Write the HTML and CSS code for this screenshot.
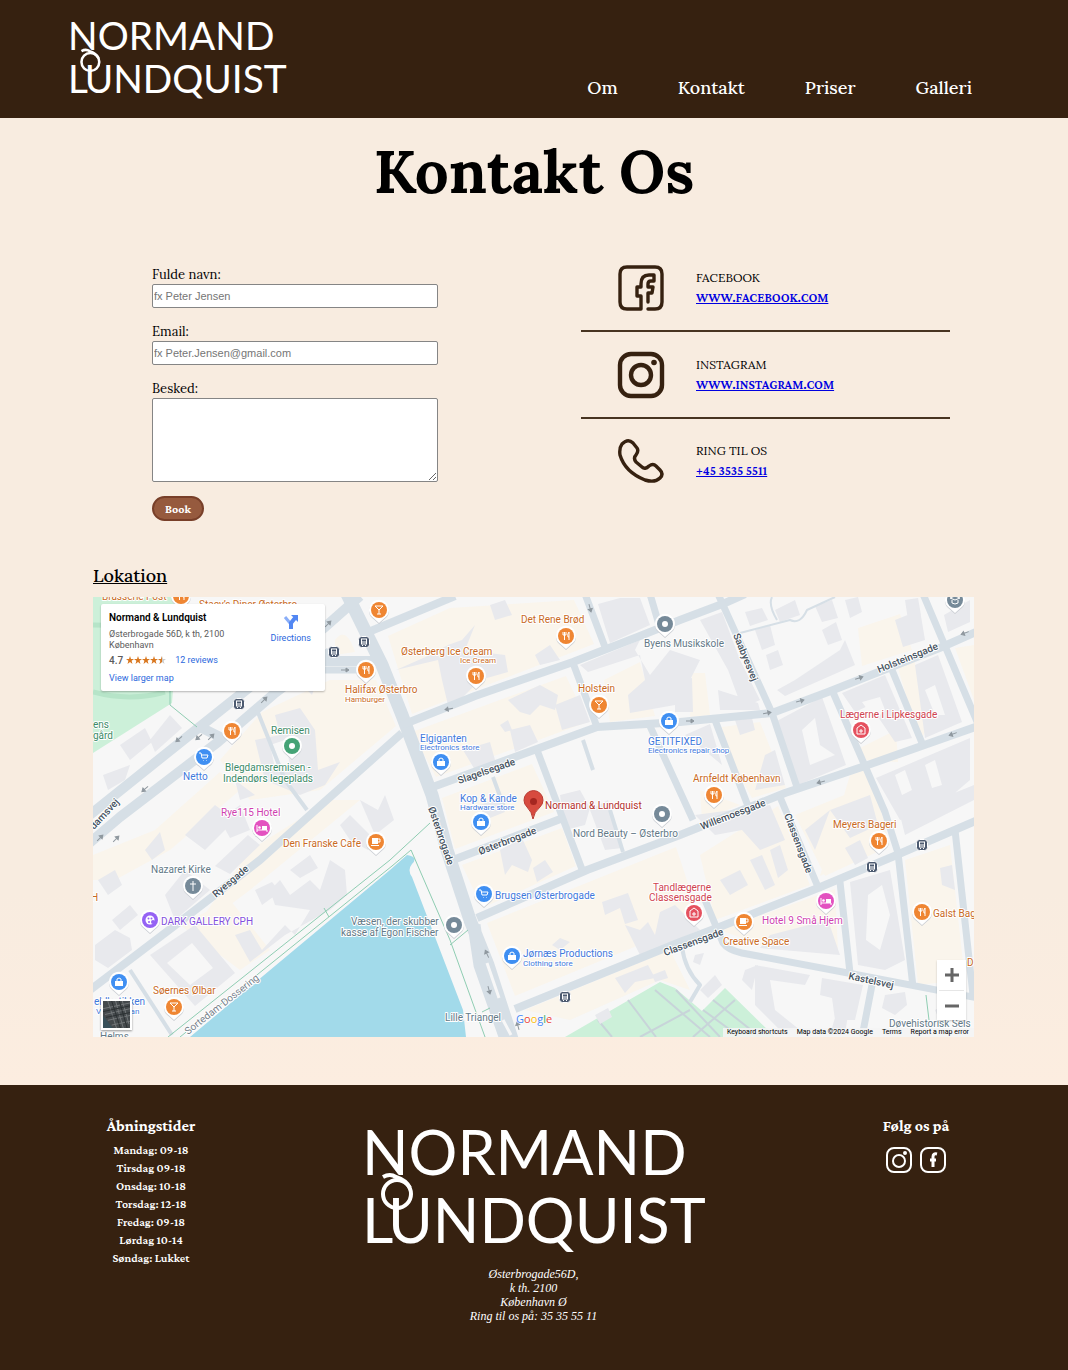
FILE: index.html
```html
<!DOCTYPE html>
<html lang="da">
<head>
<meta charset="utf-8">
<meta name="viewport" content="width=device-width, initial-scale=1">
<title>Kontakt | Normand Lundquist</title>
<link rel="stylesheet" href="styles.css">
</head>
<body>
<header class="site-header">
  <a href="#" class="brand">
    <svg class="logo" viewBox="0 0 338 126" role="img" aria-label="Normand Lundquist">
      <text class="logo-text" x="-3" y="47">NORMAND</text>
      <text class="logo-text" y="115"><tspan x="-3">L</tspan><tspan x="23">UNDQUIST</tspan></text>
      <path class="logo-swash" d="M18 49Q25 45 31 49Q41 52 45 60"/><circle class="logo-swash" cx="32" cy="66" r="14"/>
    </svg>
  </a>
  <nav class="main-nav">
    <a href="#">Om</a><a href="#">Kontakt</a><a href="#">Priser</a><a href="#">Galleri</a>
  </nav>
</header>

<main>
  <h1>Kontakt Os</h1>
  <div class="contact">
    <form class="form">
      <label for="name">Fulde navn:</label>
      <input id="name" type="text" placeholder="fx Peter Jensen">
      <label for="email">Email:</label>
      <input id="email" type="email" placeholder="fx Peter.Jensen@gmail.com">
      <label for="message">Besked:</label>
      <textarea id="message"></textarea>
      <button type="submit">Book</button>
    </form>
    <ul class="channels">
      <li>
        <svg class="channel-icon" viewBox="0 0 48 48"><path stroke-width="3.4" d="M23 45H10Q3 45 3 38V10Q3 3 10 3H38Q45 3 45 10V38Q45 45 38 45H31M24 45V32H20V23H24V20Q24 11 32 11H37V17H34Q31 17 31 20V23H36L35 29H31V38"/></svg>
        <div><p>FACEBOOK</p><a href="#">WWW.FACEBOOK.COM</a></div>
      </li>
      <li>
        <svg class="channel-icon" viewBox="0 0 48 48"><rect x="3" y="3" width="42" height="42" rx="11" stroke-width="4.4"/><circle cx="24" cy="24" r="10" stroke-width="4.4"/><circle class="solid" cx="37" cy="11.500" r="2.800"/></svg>
        <div><p>INSTAGRAM</p><a href="#">WWW.INSTAGRAM.COM</a></div>
      </li>
      <li>
        <svg class="channel-icon" viewBox="0 0 48 48"><path stroke-width="3.4" d="M5 7Q11 1 16 6L20 11Q22 14 19 18Q16 21 19 25L25 30Q28 33 32 29Q36 26 39 29L43 33Q47 37 43 41Q38 46 28 43Q8 35 3 18Q2 11 5 7Z"/></svg>
        <div><p>RING TIL OS</p><a href="tel:+4535355511">+45 3535 5511</a></div>
      </li>
    </ul>
  </div>

  <section class="location">
    <h2>Lokation</h2>
    <div class="map">
      <svg class="map-canvas" viewBox="93 597 881 440" preserveAspectRatio="xMidYMid slice">
        <defs>
          <g id="pin"><path fill="#c9cdd2" d="M0 14L-5 9.500A10 10 0 1 1 5 9.500Z"/><path fill="#fff" d="M0 13L-5 8.500A10 10 0 1 1 5 8.500Z"/><circle r="8"/></g>
          <path id="fork" class="glyph" d="M-3-4V-1M-1.500-4V-1M0-4V-1M-3-1H0M-1.500-1V4M3 4V-4Q1-2 2 1H3"/>
          <path id="glass" class="glyph" d="M-4-4H4L0 0ZM0 0V4M-2 4H2"/>
          <path id="cart" class="glyph" d="M-5-4H-3L-2 1H3L4-2H-3M-1 3.500H-.5M2.500 3.500H3"/>
          <g id="bag"><path fill="#fff" d="M-4-1H4V4H-4Z"/><path class="glyph" d="M-2-1V-3Q0-5 2-3V-1"/></g>
          <g id="bed"><path class="glyph" d="M-5-3V4M-5 2H5V4"/><path fill="#fff" d="M0-2H5V2H0Z"/><circle fill="#fff" cx="-2.500" cy="-.5" r="1.300"/></g>
          <g id="cup"><path fill="#fff" d="M-4-4H2V2H-4ZM-5 3H3V4H-5Z"/><path class="glyph" d="M2-3H4V0H2"/></g>
          <circle id="dot" fill="#fff" r="3"/>
          <path id="cross" class="glyph" d="M0-5V5M-3-2H3"/>
          <path id="clinic" class="glyph" d="M-4 4V-2L0-5L4-2V4ZM0-1V3M-2 1H2"/>
          <g id="bus"><rect fill="#4c5a70" stroke="#fff" x="-5.500" y="-5.500" width="11" height="11" rx="3"/><rect class="glyph" x="-2.500" y="-3" width="5" height="5"/><path class="glyph" d="M-2.500 0H2.500M-2 3.500H-1M1 3.500H2"/></g>
          <path id="arrow" fill="#8f989f" stroke="#8f989f" d="M-4 0H1V-2L4 0L1 2V0"/>
        </defs>
        <rect x="93" y="597" width="881" height="440" fill="#f7f7f7"/>

        <!-- commercial blocks -->
        <g fill="#faf5ec">
          <path d="M388 636L450 608L574 600L594 644L412 714ZM412 732L566 676L588 722L436 777ZM442 798L532 764L554 812L455 849ZM462 865L562 828L576 866L482 908ZM487 923L676 847L700 920L515 996ZM525 1010L670 950L690 990L660 980L570 1020ZM330 680L376 680L396 726L320 790L250 800L220 760L262 712ZM335 640Q346 625 355 652L335 655ZM155 830L220 772L240 790L170 850L115 880L93 880V855ZM250 850L330 800L360 800L250 890L190 935ZM180 925L230 900L270 950L240 970Z"/>
          <path d="M604 680L640 662L655 716L610 722ZM692 673L705 673L710 715L690 717ZM722 727L760 722L786 788L752 798L725 750ZM858 628L900 614L912 650L862 666ZM898 668L914 660L932 716L920 743ZM955 648L974 645V700ZM700 855L778 806L810 885L715 920ZM720 930L835 889L838 950L760 945ZM905 860L950 845L965 980L918 985ZM795 815L874 783L888 847L825 876ZM850 775L870 768L890 845L820 876ZM700 790L740 805L702 820ZM93 620L160 600L172 630L93 640ZM860 748L896 730L898 762L866 760Z"/>
        </g>
        <!-- parks and lake -->
        <path fill="#ccf0d9" d="M93 597H180L172 703L93 753ZM565 1037L660 982L675 988L702 1011L725 988L775 1037Z"/>
        <path fill="none" stroke="#b6e4c8" stroke-width="5" d="M93 625Q150 625 180 640M93 692Q130 702 165 692"/>
        <path fill="#a2daea" d="M190 1037L390 870L407 855Q419 857 412 864Q407 870 412 877L463 1010L466 1037Z"/>
        <path fill="none" stroke="#c8d4d9" stroke-width="2" d="M598 1020L612 1037M628 1000L656 1037M676 990L720 1037M655 990L690 1020L710 1037M640 1037L690 1010M703 1010L740 1037M713 1000L760 1037M693 1037L735 1000"/>

        <!-- buildings -->
        <g fill="#e8e9ed">
          <path d="M150 740L170 715L182 728L155 752ZM120 745L145 728L152 742L130 760ZM103 775L130 765L125 780L108 790ZM255 740L280 735L275 715L300 708L315 730L318 770L340 762L325 785L300 795L265 780ZM295 678L318 678L312 695ZM185 835L215 805L235 820L205 850ZM220 820L240 805L250 830L230 838ZM240 800L235 780L255 795ZM145 850L160 832L165 850L152 860ZM215 866L248 835L260 845L230 874ZM165 895L185 870L210 890L175 920ZM112 920L130 905L138 915L120 930ZM95 945L115 930L130 938L132 950L108 968L95 960ZM98 880L115 870L122 885L108 895Z"/>
          <path d="M150 955L195 925L235 973L195 1006ZM235 935L250 930L262 950L285 925L295 935L310 910L275 905L270 890L280 880L290 895L310 880L320 890L330 860L345 870L347 895L330 910L285 935L250 962ZM255 890L272 882L280 892L262 905ZM290 870L310 855L318 868L300 878ZM340 825L350 815L375 840L368 850L350 840ZM360 800L378 810L385 795L394 820L375 835Z"/>
          <path d="M396 670L430 655L448 645L462 640L475 625L465 650L505 655L508 672L480 680L460 700L448 705L442 680L438 660ZM535 655L550 645L560 660L540 665ZM508 700L540 685L558 695L555 710L540 705L530 715L520 712ZM555 705L580 695L590 722L562 730ZM510 730L530 725L538 742L515 752ZM463 750L490 742L495 760L475 770ZM500 725L508 720L512 730L505 732ZM490 605L505 600L512 615L495 620ZM598 604L620 598L640 598L650 625L610 643ZM622 600L640 598L645 615L628 618ZM580 665L640 640L635 650L650 675L670 650L700 660L690 680L675 705L630 713L628 695L645 680L640 655L588 672Z"/>
          <path d="M500 850L522 838L532 860L528 872L512 865L505 875ZM533 868L545 860L553 872L537 882ZM602 902L628 893L638 920L625 924L620 908L605 915ZM625 925L640 930L648 922L655 935L660 912L675 905L700 930L640 955ZM552 945L560 938L570 942L560 950ZM615 978L648 965L655 978L635 982L625 993ZM595 1015L608 1008L612 1017L600 1024ZM560 795L580 790L590 808L585 825L565 830ZM590 810L608 800L622 848L605 850ZM480 805L500 798L505 812L485 820Z"/>
          <path d="M700 620L722 612L740 660L760 700L742 708L728 670ZM718 690L740 697L758 703L760 710L720 710ZM675 680L692 678L693 712L675 712ZM745 612L762 608L768 620L750 626ZM755 630L770 625L775 645L762 650ZM766 655L778 650L783 665L770 670ZM775 610L795 600L800 615L780 622ZM777 690L795 680L840 650L845 640L855 665L785 696ZM815 606L832 600L838 618L822 622ZM822 630L836 622L842 640L828 645ZM845 600L858 597L862 612L850 618ZM895 620L920 610L925 640L903 647ZM905 600L918 598L921 615L908 620ZM944 615L970 600V622L948 632Z"/>
          <path d="M775 722L822 697L846 765L798 785ZM842 693L885 675L912 738L895 742L870 705L855 712ZM915 665L938 655L962 722L925 738ZM876 778L970 738V780L935 810L900 820ZM900 815L974 785V800L905 835ZM735 720L752 718L755 730L740 735ZM765 755L775 750L785 785L755 790ZM685 735L710 724L722 765L710 755ZM695 815L770 805L785 840L760 850L742 830L715 835ZM750 860L762 855L775 885L765 890ZM720 880L740 870L748 885L730 895ZM770 850L780 845L788 870L778 878ZM805 830L830 810L870 795L878 825L850 838L830 810L815 850ZM845 848L860 840L868 858L855 865Z"/>
          <path d="M850 882L890 870L905 960L885 970L858 965ZM770 935L828 920L840 955L760 948ZM940 868L952 865L955 890L942 885ZM755 965L810 975L805 985L770 980L775 1010L800 1030L780 1030L755 1005ZM822 978L863 985L855 1020L835 1020L832 998L820 995ZM885 995L905 992L907 1005L895 1015L882 1008ZM745 970L758 965L752 990L742 980ZM700 990L715 975L722 985L708 998ZM695 955L704 953L700 965L693 962ZM652 975L665 970L668 978L655 982ZM935 1010L960 995L955 1020L940 1022ZM840 1000L850 1000L845 1035L830 1035Z"/>
        </g>
        <path fill="#f7f7f7" d="M167 963L192 943L213 968L190 985ZM802 730L815 718L820 745L835 755L810 765ZM862 702L880 697L885 710L875 720ZM868 895L882 885L890 915L880 950L866 940ZM895 775L905 770L912 790L902 795ZM925 765L935 760L942 785L932 788ZM270 745L285 740L290 765L275 768ZM925 690L935 685L945 715L935 715Z"/>

        <!-- streets -->
        <g fill="none" stroke="#d6dfe6" stroke-linejoin="round">
          <path stroke-width="13" d="M345 590L382 665L402 715L432 795L447 850L470 920L488 965L513 1042M474 925L480 965L507 1042"/>
          <path stroke-width="10" d="M86 818L197 729L325 627L360 596M86 846L120 817L218 742L275 693L330 652M198 726L222 738M325 661H378"/>
          <path stroke-width="8" d="M86 993L190 914L260 860L320 806L402 733M366 633L455 596M402 725L475 696L573 662L640 636L680 620L725 603L745 594M430 788L597 727L680 722L772 713L828 692L942 647L978 631M453 860L563 818M477 918L587 870L680 835L785 793L862 767L978 726M515 1009L680 942L722 926L818 888L892 857L978 820"/>
          <path stroke-width="7" d="M325 670H375M573 663L597 727M585 594L605 647M650 594L660 628M537 750L583 872M718 594L772 713L798 790M780 797L818 887M715 720L748 806M649 724L693 820M832 690L885 812L898 853L913 987M892 670L922 743M923 594L978 724M840 882L850 973M955 830L973 995M705 900L723 943Q728 950 742 953L848 973L978 998M872 985L862 1037"/>
          <path stroke-width="4" d="M682 947Q685 970 700 985L690 1002M583 740L593 770M493 777L505 810M610 810L623 852M257 710L285 780L307 810M130 970L172 1035"/>
          <path stroke-width="2" d="M740 633L790 620Q800 625 807 610L835 597M772 597Q768 605 777 620"/>
        </g>
        <path fill="none" stroke="#f7f7f7" stroke-width="3" d="M487 963L499 998M503 1020L511 1035"/>
        <path fill="none" stroke="#8fcdb2" d="M168 1037L390 860L430 823M180 1037L392 866L411 850L450 940L485 1037M324 908L329 917M450 945L468 930M482 1012L490 1008M170 690V705L197 727M926 995L929 1020"/>

        <use href="#arrow" transform="translate(179 739) rotate(140)"/><use href="#arrow" transform="translate(199 737) rotate(140)"/><use href="#arrow" transform="translate(211 737) rotate(-45)"/><use href="#arrow" transform="translate(264 700) rotate(-45)"/><use href="#arrow" transform="translate(145 789) rotate(140)"/><use href="#arrow" transform="translate(100 838) rotate(-45)"/><use href="#arrow" transform="translate(116 839) rotate(-45)"/><use href="#arrow" transform="translate(328 624) rotate(-45)"/><use href="#arrow" transform="translate(345 670)"/><use href="#arrow" transform="translate(449 709) rotate(170)"/><use href="#arrow" transform="translate(590 608) rotate(75)"/><use href="#arrow" transform="translate(690 721)"/><use href="#arrow" transform="translate(767 713) rotate(-10)"/><use href="#arrow" transform="translate(800 701) rotate(-15)"/><use href="#arrow" transform="translate(859 678) rotate(-18)"/><use href="#arrow" transform="translate(965 633) rotate(160)"/><use href="#arrow" transform="translate(953 734) rotate(160)"/><use href="#arrow" transform="translate(821 782) rotate(165)"/><use href="#arrow" transform="translate(487 954) rotate(-115)"/><use href="#arrow" transform="translate(489 990) rotate(75)"/><use href="#arrow" transform="translate(518 1026) rotate(-105)"/>

        <!-- street names -->
        <g class="street">
          <text transform="translate(94 830) rotate(-47)">damsvej</text>
          <text transform="translate(216 898) rotate(-40)">Ryesgade</text>
          <text transform="translate(459 784) rotate(-19)">Slagelsegade</text>
          <text transform="translate(480 855) rotate(-21)">Østerbrogade</text>
          <text transform="translate(428 808) rotate(71)">Østerbrogade</text>
          <text transform="translate(733 635) rotate(68)">Saabyesvej</text>
          <text transform="translate(879 673) rotate(-22)">Holsteinsgade</text>
          <text transform="translate(702 830) rotate(-21)">Willemoesgade</text>
          <text transform="translate(784 815) rotate(69)">Classensgade</text>
          <text transform="translate(665 956) rotate(-20)">Classensgade</text>
          <text transform="translate(848 979) rotate(12)">Kastelsvej</text>
          <text class="path-name" transform="translate(188 1035) rotate(-38)">Sortedam Dossering</text>
        </g>

        <!-- places -->
        <g class="place food">
          <text x="102" y="600">Brasserie Post</text><text x="199" y="608">Stacy’s Diner Østerbro</text>
          <text x="345" y="693">Halifax Østerbro</text><text class="kind" x="345" y="702">Hamburger</text>
          <text x="401" y="655">Østerberg Ice Cream</text><text class="kind" x="460" y="663">Ice Cream</text>
          <text x="521" y="623">Det Rene Brød</text><text x="578" y="692">Holstein</text>
          <text x="283" y="847">Den Franske Cafe</text><text x="153" y="994">Søernes Ølbar</text>
          <text x="693" y="782">Arnfeldt København</text><text x="833" y="828">Meyers Bageri</text>
          <text x="933" y="917">Galst Bageri</text><text x="723" y="945">Creative Space</text>
          <text x="967" y="966">D</text><text x="91" y="901">H</text>
        </g>
        <g class="place shop">
          <text x="420" y="742">Elgiganten</text><text class="kind" x="420" y="750">Electronics store</text>
          <text x="460" y="802">Kop &amp; Kande</text><text class="kind" x="460" y="810">Hardware store</text>
          <text x="648" y="745">GETITFIXED</text><text class="kind" x="648" y="753">Electronics repair shop</text>
          <text x="183" y="780">Netto</text><text x="495" y="899">Brugsen Østerbrogade</text>
          <text x="523" y="957">Jørnæs Productions</text><text class="kind" x="523" y="966">Clothing store</text>
          <text x="94" y="1005">eldbutikken</text><text class="kind" x="96" y="1014">Vesterbroan</text>
        </g>
        <g class="place civic">
          <text x="644" y="647">Byens Musikskole</text><text x="573" y="837">Nord Beauty – Østerbro</text>
          <text x="151" y="873">Nazaret Kirke</text><text x="351" y="925">Væsen, der skubber</text><text x="341" y="936">kasse af Egon Fischer</text>
          <text x="445" y="1021">Lille Triangel</text><text x="889" y="1027">Døvehistorisk Sels</text><text x="100" y="1040">Helms</text>
        </g>
        <g class="place green">
          <text x="271" y="734">Remisen</text><text x="225" y="771">Blegdamsremisen -</text><text x="223" y="782">Indendørs legeplads</text>
          <text x="93" y="728">ens</text><text x="93" y="739">gård</text>
        </g>
        <g class="place hotel"><text x="221" y="816">Rye115 Hotel</text><text x="762" y="924">Hotel 9 Små Hjem</text></g>
        <g class="place health"><text x="840" y="718">Lægerne i Lipkesgade</text><text x="653" y="891">Tandlægerne</text><text x="649" y="901">Classensgade</text></g>
        <text class="place gallery" x="161" y="925">DARK GALLERY CPH</text>
        <text class="place main-place" x="545" y="809">Normand &amp; Lundquist</text>

        <!-- pins -->
        <g fill="#ef8633">
          <g transform="translate(181 596)"><use href="#pin"/><use href="#fork"/></g>
          <g transform="translate(379 610)"><use href="#pin"/><use href="#glass"/></g>
          <g transform="translate(366 670)"><use href="#pin"/><use href="#fork"/></g>
          <g transform="translate(232 731)"><use href="#pin"/><use href="#fork"/></g>
          <g transform="translate(476 676)"><use href="#pin"/><use href="#fork"/></g>
          <g transform="translate(566 636)"><use href="#pin"/><use href="#fork"/></g>
          <g transform="translate(599 705)"><use href="#pin"/><use href="#glass"/></g>
          <g transform="translate(376 842)"><use href="#pin"/><use href="#cup"/></g>
          <g transform="translate(174 1007)"><use href="#pin"/><use href="#glass"/></g>
          <g transform="translate(714 795)"><use href="#pin"/><use href="#fork"/></g>
          <g transform="translate(879 841)"><use href="#pin"/><use href="#fork"/></g>
          <g transform="translate(922 912)"><use href="#pin"/><use href="#fork"/></g>
          <g transform="translate(744 922)"><use href="#pin"/><use href="#cup"/></g>
        </g>
        <g fill="#3f8ff2">
          <g transform="translate(204 757)"><use href="#pin"/><use href="#cart"/></g>
          <g transform="translate(441 762)"><use href="#pin"/><use href="#bag"/></g>
          <g transform="translate(481 822)"><use href="#pin"/><use href="#bag"/></g>
          <g transform="translate(669 721)"><use href="#pin"/><use href="#bag"/></g>
          <g transform="translate(484 894)"><use href="#pin"/><use href="#cart"/></g>
          <g transform="translate(512 956)"><use href="#pin"/><use href="#bag"/></g>
          <g transform="translate(119 982)"><use href="#pin"/><use href="#bag"/></g>
        </g>
        <g fill="#768a99">
          <g transform="translate(665 624)"><use href="#pin"/><use href="#dot"/></g>
          <g transform="translate(662 814)"><use href="#pin"/><use href="#dot"/></g>
          <g transform="translate(454 925)"><use href="#pin"/><use href="#dot"/></g>
          <g transform="translate(193 886)"><use href="#pin"/><use href="#cross"/></g>
          <g transform="translate(955 600)"><use href="#pin"/><path class="glyph" d="M-5-2L0-4L5-2L0 0ZM-3 0V3Q0 5 3 3V0"/></g>
        </g>
        <g fill="#45a376" transform="translate(292 746)"><use href="#pin"/><use href="#dot"/></g>
        <g fill="#e352c0"><g transform="translate(262 828)"><use href="#pin"/><use href="#bed"/></g><g transform="translate(826 901)"><use href="#pin"/><use href="#bed"/></g></g>
        <g fill="#e5515f"><g transform="translate(861 730)"><use href="#pin"/><use href="#clinic"/></g><g transform="translate(694 913)"><use href="#pin"/><use href="#clinic"/></g></g>
        <g fill="#9562f4" transform="translate(150 920)"><use href="#pin"/><circle r="4.500" fill="#fff"/><circle cx="-1.500" cy="-1.500" r="1"/><circle cx="1.500" cy="-1.500" r="1"/><circle cx="-1" cy="2" r="1"/><circle cx="3" cy="2" r="2"/></g>
        <path fill="#d74b3f" stroke="#b93a32" d="M533 819Q532 812 527 807A9.500 9.500 0 1 1 540 807Q534 812 533 819Z"/><circle cx="533.500" cy="801.500" r="3.500" fill="#a52620"/>
        <use href="#bus" x="334" y="652"/><use href="#bus" x="364" y="642"/><use href="#bus" x="239" y="704"/><use href="#bus" x="565" y="997"/><use href="#bus" x="872" y="867"/><use href="#bus" x="922" y="845"/>
        <text class="google" x="516" y="1023"><tspan fill="#4285f4">G</tspan><tspan fill="#ea4335">o</tspan><tspan fill="#fbbc05">o</tspan><tspan fill="#4285f4">g</tspan><tspan fill="#34a853">l</tspan><tspan fill="#ea4335">e</tspan></text>
      </svg>

      <div class="place-card">
        <div class="place-info">
          <h3>Normand &amp; Lundquist</h3>
          <p>Østerbrogade 56D, k th, 2100<br>København</p>
          <div class="rating"><span>4.7</span>
            <svg viewBox="0 0 40 8" width="40" height="8"><defs><path id="star" d="M4 0L5 3H8L5.600 4.800L6.500 8L4 6L1.500 8L2.400 4.800L0 3H3Z"/></defs><g fill="#d9771f"><use href="#star"/><use href="#star" x="8"/><use href="#star" x="16"/><use href="#star" x="24"/></g><use href="#star" x="32" fill="#ccc"/><path fill="#d9771f" d="M36 0V6L33.500 8L34.400 4.800L32 3H35Z"/></svg>
            <a href="#">12 reviews</a></div>
          <a href="#">View larger map</a>
        </div>
        <a class="directions" href="#">
          <svg viewBox="0 0 16 16" width="16" height="16"><path fill="none" stroke="#8aaef8" stroke-width="3" d="M2 3L7 9"/><path fill="none" stroke="#5287f3" stroke-width="4" d="M8 15V9L12 4"/><path fill="#5287f3" d="M8 1H15V8Z"/></svg>
          Directions
        </a>
      </div>
      <button class="satellite" type="button" aria-label="Satellit">
        <svg viewBox="0 0 28 28"><path fill="#454a4d" d="M0 0H28V28H0Z"/><path fill="#38505a" d="M0 15L10 28H0Z"/><path stroke="#74787a" d="M0 8L28 2M2 14L28 8M5 20L28 15M9 25L28 21M5 0L14 28M13 0L21 28M20 0L27 24"/><path stroke="#2b3032" d="M0 11L28 5M3 17L28 12M9 0L18 28M17 0L25 28"/></svg>
      </button>
      <div class="zoom">
        <button type="button" aria-label="Zoom ind"><svg viewBox="0 0 14 14"><path d="M7 0V14M0 7H14"/></svg></button>
        <button type="button" aria-label="Zoom ud"><svg viewBox="0 0 14 14"><path d="M0 7H14"/></svg></button>
      </div>
      <div class="map-legal"><a href="#">Keyboard shortcuts</a><span>Map data ©2024 Google</span><a href="#">Terms</a><a href="#">Report a map error</a></div>
    </div>
  </section>
</main>

<footer class="site-footer">
  <section class="hours">
    <h2>Åbningstider</h2>
    <p>Mandag: 09-18</p><p>Tirsdag 09-18</p><p>Onsdag: 10-18</p><p>Torsdag: 12-18</p><p>Fredag: 09-18</p><p>Lørdag 10-14</p><p>Søndag: Lukket</p>
  </section>
  <div class="footer-brand">
    <svg class="logo" viewBox="0 0 338 126" role="img" aria-label="Normand Lundquist">
      <text class="logo-text" x="-3" y="47">NORMAND</text>
      <text class="logo-text" y="115"><tspan x="-3">L</tspan><tspan x="23">UNDQUIST</tspan></text>
      <path class="logo-swash" d="M18 49Q25 45 31 49Q41 52 45 60"/><circle class="logo-swash" cx="32" cy="66" r="14"/>
    </svg>
    <address>Østerbrogade56D,<br>k th. 2100<br>København Ø<br>Ring til os på: 35 35 55 11</address>
  </div>
  <section class="follow">
    <h2>Følg os på</h2>
    <div class="social">
      <a href="#" aria-label="Instagram"><svg viewBox="0 0 28 28"><rect x="2" y="2" width="24" height="24" rx="7"/><circle cx="14" cy="15" r="6"/><circle class="solid" cx="20" cy="7" r="1"/></svg></a>
      <a href="#" aria-label="Facebook"><svg viewBox="0 0 28 28"><rect x="2" y="2" width="24" height="24" rx="7"/><path stroke-width="3" d="M18 8Q14 7 14 11V21M11 14H17"/></svg></a>
    </div>
  </section>
</footer>
</body>
</html>
```
FILE: styles.css
```css
* { box-sizing: border-box; }
body {
  margin: 0;
  background: #fcede0;
  color: #000;
  font-family: Lora, "Liberation Serif", serif;
}
h1, h2, h3, p, ul { margin: 0; padding: 0; }

.site-header {
  display: flex;
  justify-content: space-between;
  align-items: flex-end;
  height: 118px;
  padding: 0 96px 18px 70px;
  background: #362110;
}
.brand { display: block; width: 215px; }
.logo { display: block; width: 100%; overflow: visible; }
.logo-text { fill: #fff; font: 400 61px Lato, sans-serif; }
.logo-swash { fill: none; stroke: #fff; stroke-width: 4; }
.main-nav { display: flex; gap: 60px; font-size: 18px; font-weight: 500; line-height: 24px; }
.main-nav a { color: #fff; text-decoration: none; }

main { padding-bottom: 48px; background: linear-gradient(#f8ece0, #f8ece0 80%, #fcede0); }
h1 { padding-top: 16px; font-size: 60px; line-height: 74px; text-align: center; }

.contact {
  display: grid;
  grid-template-columns: 1fr 1fr;
  gap: 94px;
  padding: 37px 118px 0;
}
.form { display: flex; flex-direction: column; padding: 20px 49px 0 34px; font-size: 13px; }
.form label { line-height: 19px; }
.form input, .form textarea {
  width: 100%;
  height: 24px;
  margin: 0 0 14px;
  padding: 1px;
  border: 1px solid #858585;
  border-radius: 2px;
  background: #fff;
  font: 11px "Liberation Sans", sans-serif;
}
.form textarea { height: 84px; }
.form button {
  align-self: flex-start;
  height: 25px;
  padding: 0 11px;
  border: 2px solid #783f29;
  border-radius: 13px;
  background: #965a3e;
  color: #fff;
  font: 700 12px "Crimson Pro", "Liberation Serif", serif;
}

.channels { list-style: none; }
.channels li {
  display: flex;
  align-items: center;
  gap: 31px;
  height: 87px;
  padding-left: 36px;
  border-bottom: 2px solid #483421;
}
.channels li:last-child { height: 84px; border: 0; }
.channels li > div { display: flex; flex-direction: column; align-items: flex-start; }
.channel-icon { width: 48px; height: 48px; fill: none; stroke: #362110; stroke-linecap: round; stroke-linejoin: round; }
.channel-icon .solid { fill: #362110; stroke: none; }
.channels p, .channels a { font-size: 12px; line-height: 20px; }
.channels a { color: #0000e0; font-family: "Crimson Pro", "Liberation Serif", serif; font-size: 13px; font-weight: 600; }

.location { padding: 43px 94px 0 93px; }
.location h2 { font-size: 18px; font-weight: 500; line-height: 24px; text-decoration: underline; }
.map { position: relative; height: 440px; margin-top: 9px; overflow: hidden; font-family: Roboto, sans-serif; }
.map-canvas { display: block; width: 100%; height: 100%; }
.glyph { fill: none; stroke: #fff; stroke-width: 1; }
.place, .street { font-size: 10px; paint-order: stroke; stroke: #fff; stroke-width: 2px; stroke-linejoin: round; }
.kind { font-size: 8px; }
.street { fill: #455260; font-weight: 500; }
.path-name { fill: #75808a; font-weight: 400; }
.food { fill: #c96a24; }
.shop { fill: #3f79dc; }
.civic { fill: #637987; }
.green { fill: #3d8b68; }
.hotel { fill: #cf3fb0; }
.health { fill: #cf4350; }
.gallery { fill: #8250dc; }
.main-place { fill: #b3302c; }
.google { font: 500 11px "Open Sans", sans-serif; paint-order: stroke; stroke: #fff; stroke-width: 1px; }

.place-card {
  position: absolute;
  top: 7px;
  left: 8px;
  display: flex;
  justify-content: space-between;
  width: 224px;
  height: 87px;
  padding: 8px 14px 0 8px;
  border-radius: 2px;
  background: #fff;
  box-shadow: 0 1px 2px #0004;
  color: #5b5b5b;
  font-size: 9px;
}
.place-card h3 { color: #000; font-size: 10px; font-weight: 600; line-height: 12px; }
.place-card p { margin-top: 5px; line-height: 11px; }
.place-card a { color: #2b68dd; text-decoration: none; }
.rating { display: flex; align-items: center; gap: 3px; height: 18px; }
.rating span { font-size: 10px; font-weight: 500; }
.rating a { margin-left: 6px; }
.place-info > a { display: block; line-height: 18px; }
.directions { display: flex; flex-direction: column; align-items: center; gap: 3px; padding-top: 2px; }

.satellite {
  position: absolute;
  bottom: 7px;
  left: 8px;
  width: 31px;
  height: 31px;
  padding: 0;
  border: 2px solid #fff;
  background: #454a4d;
  box-shadow: 0 1px 2px #0006;
}
.satellite svg { display: block; width: 100%; }
.zoom {
  position: absolute;
  right: 8px;
  bottom: 17px;
  width: 29px;
  padding: 0 2px;
  background: #fff;
  box-shadow: 0 1px 2px #0003;
}
.zoom button { display: grid; place-items: center; width: 100%; height: 30px; padding: 0; border: 0; background: none; }
.zoom button + button { border-top: 1px solid #e6e6e6; }
.zoom svg { width: 14px; fill: none; stroke: #666; stroke-width: 3; }
.map-legal {
  position: absolute;
  right: 0;
  bottom: 0;
  display: flex;
  gap: 9px;
  padding: 0 5px 0 4px;
  background: #f5f5f5dd;
  font-size: 7px;
  line-height: 9px;
}
.map-legal a { color: #000; text-decoration: none; }

.site-footer {
  display: grid;
  grid-template-columns: 116px 1fr 116px;
  min-height: 285px;
  padding: 30px 94px 45px 93px;
  background: #362110;
  color: #fff;
  font-family: "Crimson Pro", "Liberation Serif", serif;
  text-align: center;
}
.site-footer h2 { font-size: 16px; line-height: 22px; }
.hours p { font-size: 12px; font-weight: 600; line-height: 18px; }
.hours h2 { margin-bottom: 4px; }
.footer-brand { display: flex; flex-direction: column; align-items: center; gap: 13px; padding-top: 13px; }
.footer-brand .logo { max-width: 338px; }
address { font-family: "Liberation Serif", serif; font-size: 12px; line-height: 14px; }
.social { display: flex; justify-content: center; gap: 6px; margin-top: 9px; }
.social svg { display: block; width: 28px; fill: none; stroke: #fff; stroke-width: 2; }
.social .solid { fill: #fff; }
```
